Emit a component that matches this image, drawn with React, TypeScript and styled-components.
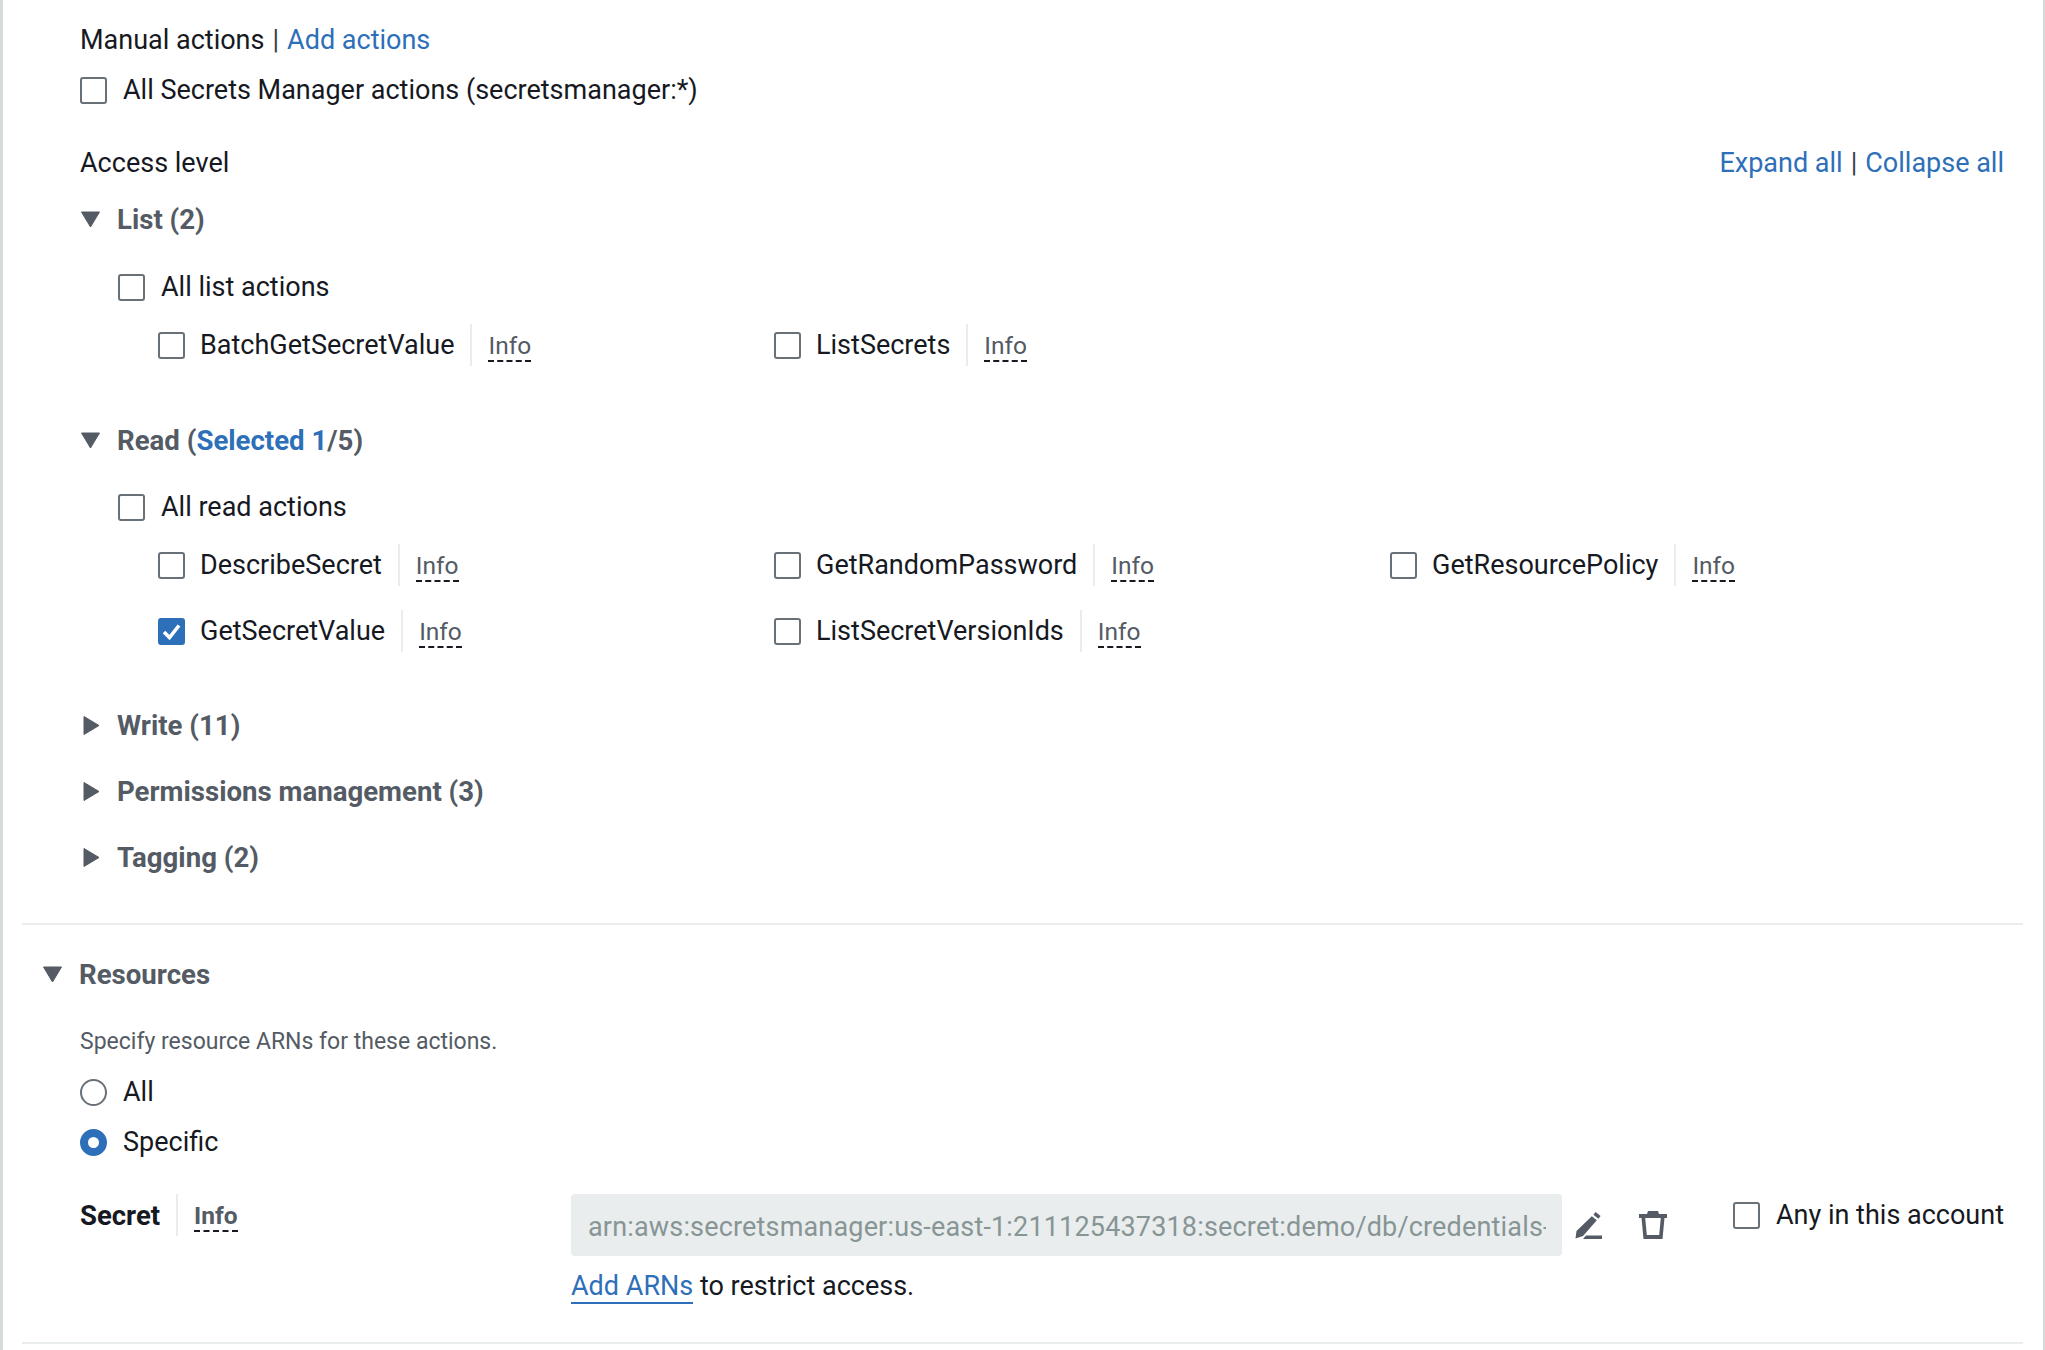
import React from 'react'
import styled, { createGlobalStyle } from 'styled-components'

const Global = createGlobalStyle`
  html, body { margin: 0; padding: 0; background: #fff; }
  body { font-family: Roboto, "Liberation Sans", sans-serif; color: #16191f; }
`

const Frame = styled.div`
  width: 2045px;
  height: 1350px;
  box-sizing: border-box;
  overflow: hidden;
  border-left: 3px solid #d5dbdb;
  border-right: 2px solid #d5dbdb;
  padding: 0 20px 0 19px;
`

const Section = styled.section`
  padding: 0 0 42px 58px;
`

const Row = styled.div<{ $mt?: number; $indent?: number }>`
  display: flex;
  align-items: center;
  height: 48px;
  margin-top: ${(p) => p.$mt ?? 0}px;
  padding-left: ${(p) => p.$indent ?? 0}px;
  font-size: 27px;
`

const Spread = styled(Row)`
  justify-content: space-between;
  padding-right: 19px;
`

const Link = styled.a`
  color: #2d6fb8;
  text-decoration: none;
`

const Bar = styled.span`
  margin: 0 8px;
  color: #3a3f47;
`

const Box = styled.span<{ $checked?: boolean; $gap?: number }>`
  flex: none;
  display: flex;
  align-items: center;
  justify-content: center;
  width: 27px;
  height: 27px;
  box-sizing: border-box;
  border-radius: 3px;
  border: 2px solid ${(p) => (p.$checked ? '#2d6fb8' : '#687078')};
  background: ${(p) => (p.$checked ? '#2d6fb8' : '#fff')};
  margin-right: ${(p) => p.$gap ?? 16}px;
`

const Toggle = styled.div<{ $mt?: number; $h?: number }>`
  display: flex;
  align-items: center;
  height: ${(p) => p.$h ?? 48}px;
  margin-top: ${(p) => p.$mt ?? 0}px;
  font-size: 27.6px;
  font-weight: 700;
  color: #545b64;
`

const Caret = styled.svg`
  width: 21px;
  height: 21px;
  margin-right: 16px;
  flex: none;
  fill: #545b64;
  stroke: #545b64;
  stroke-width: 1;
  stroke-linejoin: round;
`

const Selected = styled.span`
  color: #2d6fb8;
`

const ActionGrid = styled.div`
  display: grid;
  grid-template-columns: repeat(3, 616px);
  padding-left: 78px;
  margin-top: 1px;
`

const Action = styled.div`
  display: flex;
  align-items: center;
  height: 66px;
  font-size: 27px;
`

const InfoWrap = styled.span`
  display: flex;
  align-items: center;
  height: 42px;
  margin-left: 16px;
  padding-left: 16px;
  border-left: 2px solid #eaeded;
`

const Info = styled.span`
  font-size: 24.5px;
  line-height: 28px;
  color: #545b64;
  border-bottom: 2px dashed #16191f;
  margin-top: 4px;
`

const Divider = styled.hr`
  margin: 0;
  border: 0;
  border-top: 2px solid #eaeded;
`

const Resources = styled.section`
  padding: 0 0 38px 20px;
`

const ResourceBody = styled.div`
  padding-left: 38px;
`

const Hint = styled.div`
  font-size: 23px;
  line-height: 34px;
  color: #545b64;
  padding-top: 2px;
  margin-bottom: 8px;
`

const RadioRow = styled.div`
  display: flex;
  align-items: center;
  height: 50px;
  font-size: 27px;
`

const Radio = styled.span<{ $on?: boolean }>`
  flex: none;
  width: 27px;
  height: 27px;
  box-sizing: border-box;
  border-radius: 50%;
  border: ${(p) => (p.$on ? '8px solid #2d6fb8' : '2px solid #687078')};
  background: #fff;
  margin-right: 16px;
`

const SecretRow = styled.div`
  display: grid;
  grid-template-columns: 491px 1fr auto;
  padding-top: 27px;
  padding-right: 19px;
`

const SecretLabel = styled.div`
  display: flex;
  align-items: center;
  align-self: start;
  height: 42px;
  font-size: 27.5px;
  font-weight: 700;
  color: #16191f;
`

const SecretField = styled.div`
  display: flex;
  align-items: center;
`

const ArnInput = styled.div`
  width: 991px;
  height: 62px;
  box-sizing: border-box;
  background: #eaeded;
  border-radius: 4px;
  padding: 0 16px 0 17px;
  display: flex;
  align-items: center;
`

const ArnValue = styled.span`
  font-size: 27px;
  letter-spacing: 0.17px;
  line-height: 36px;
  padding-top: 3px;
  color: #879596;
  overflow: hidden;
  white-space: nowrap;
`

const IconBtn = styled.svg`
  width: 28px;
  height: 28px;
  flex: none;
  fill: #545b64;
`

const Icons = styled.div`
  display: flex;
  gap: 37px;
  margin-left: 12px;
`

const AnyAccount = styled.div`
  display: flex;
  align-items: center;
  height: 42px;
  font-size: 27px;
  align-self: start;
`

const Restrict = styled.div`
  grid-column: 2;
  font-size: 27px;
  margin-top: 12px;
  line-height: 36px;
`

const UnderLink = styled(Link)`
  border-bottom: 2px solid #2d6fb8;
`

const TriangleDown = () => (
  <Caret viewBox="0 0 21 21"><path d="M1.500 3h18L10.500 18z" /></Caret>
)

const TriangleRight = () => (
  <Caret viewBox="0 0 21 21"><path d="M4 1.500l15 9-15 9z" /></Caret>
)

const Check = () => (
  <svg width="21" height="19" viewBox="0 0 21 19">
    <path d="M3 10l5.500 5.500L18 3.500" fill="none" stroke="#fff" strokeWidth="3.6" />
  </svg>
)

const ActionItem = ({ name, checked }: { name: string; checked?: boolean }) => (
  <Action>
    <Box $checked={checked} $gap={15}>{checked && <Check />}</Box>
    {name}
    <InfoWrap><Info>Info</Info></InfoWrap>
  </Action>
)

export default function App() {
  return (
    <>
      <Global />
      <Frame>
        <Section>
          <Row $mt={16}>
            Manual actions<Bar>|</Bar><Link>Add actions</Link>
          </Row>
          <Row $mt={2}><Box />All Secrets Manager actions (secretsmanager:*)</Row>
          <Spread $mt={25}>
            Access level
            <span><Link>Expand all</Link><Bar>|</Bar><Link>Collapse all</Link></span>
          </Spread>
          <Toggle $mt={8}><TriangleDown />List (2)</Toggle>

          <Row $mt={20} $indent={38}><Box />All list actions</Row>
          <ActionGrid>
            <ActionItem name="BatchGetSecretValue" />
            <ActionItem name="ListSecrets" />
          </ActionGrid>

          <Toggle $mt={38}><TriangleDown />Read (<Selected>Selected 1</Selected>/5)</Toggle>
          <Row $mt={19} $indent={38}><Box />All read actions</Row>
          <ActionGrid>
            <ActionItem name="DescribeSecret" />
            <ActionItem name="GetRandomPassword" />
            <ActionItem name="GetResourcePolicy" />
            <ActionItem name="GetSecretValue" checked />
            <ActionItem name="ListSecretVersionIds" />
          </ActionGrid>

          <Toggle $mt={37}><TriangleRight />Write (11)</Toggle>
          <Toggle $mt={18}><TriangleRight />Permissions management (3)</Toggle>
          <Toggle $mt={18}><TriangleRight />Tagging (2)</Toggle>
        </Section>
        <Divider />
        <Resources>
          <Toggle $h={98}><TriangleDown />Resources</Toggle>
          <ResourceBody>
            <Hint>Specify resource ARNs for these actions.</Hint>
            <RadioRow><Radio />All</RadioRow>
            <RadioRow><Radio $on />Specific</RadioRow>
            <SecretRow>
              <SecretLabel>
                Secret
                <InfoWrap><Info>Info</Info></InfoWrap>
              </SecretLabel>
              <SecretField>
                <ArnInput><ArnValue>arn:aws:secretsmanager:us-east-1:211125437318:secret:demo/db/credentials-</ArnValue></ArnInput>
                <Icons>
                  <IconBtn viewBox="0 0 28 28">
                    <path d="M21.6 1l5 4-2.200 2.700-5-4zM17.800 5.300l5 4L9 25l-7.500 2.500L2.500 20z" />
                    <path d="M12 24.500h16V28H9z" />
                  </IconBtn>
                  <IconBtn viewBox="0 0 28 28">
                    <path d="M9 0h10l1 3h8v4h-2.500l-2 21H4.500l-2-21H0V3h8zM6.200 7l1.600 17h12.400l1.600-17z" />
                  </IconBtn>
                </Icons>
              </SecretField>
              <AnyAccount><Box />Any in this account</AnyAccount>
              <Restrict><UnderLink>Add ARNs</UnderLink> to restrict access.</Restrict>
            </SecretRow>
          </ResourceBody>
        </Resources>
        <Divider />
      </Frame>
    </>
  )
}
